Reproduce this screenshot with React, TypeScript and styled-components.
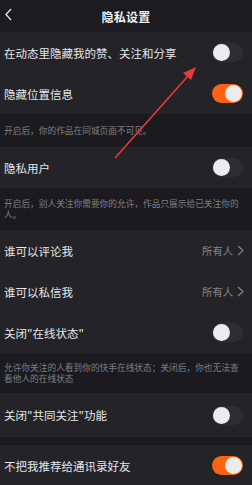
import * as React from 'react';
import styled, { createGlobalStyle } from 'styled-components';

const GlobalStyle = createGlobalStyle`
  html, body {
    margin: 0;
    padding: 0;
    background: #1b1b20;
  }
  * {
    box-sizing: border-box;
  }
`;

const Page = styled.div`
  position: relative;
  width: 252px;
  height: 485px;
  overflow: hidden;
  background: #1c1c21;
  font-family: 'Noto Sans CJK SC', 'Noto Sans', sans-serif;
  color: #e4e4e6;
`;
const Header = styled.div`
  height: 32px;
  display: flex;
  align-items: center;
  justify-content: center;
  position: relative;
  background: #1b1b20;
`;
const Back = styled.svg`
  position: absolute;
  left: 4px;
  top: 8px;
`;
const Title = styled.div`
  font-size: 12px;
  font-weight: 700;
  letter-spacing: 0.3px;
  color: #f0f0f2;
`;
const Row = styled.div<{ $h?: number }>`
  height: ${({ $h }) => $h ?? 41}px;
  padding: 0 9px 0 4px;
  display: flex;
  align-items: center;
  justify-content: space-between;
  background: #232328;
`;
const Label = styled.div`
  font-size: 11.5px;
  color: #e6e6e8;
  white-space: nowrap;
`;
const Note = styled.div<{ $h: number }>`
  height: ${({ $h }) => $h}px;
  padding: 0 8px 0 4px;
  display: flex;
  align-items: center;
  font-size: 8.7px;
  line-height: 11px;
  color: #7e7e84;
  background: #1b1b1f;
`;
const Gap = styled.div`
  height: 8px;
  background: #1b1b1f;
`;
const Track = styled.div<{ $on?: boolean }>`
  width: 31px;
  height: 19px;
  border-radius: 10px;
  padding: 1px;
  display: flex;
  justify-content: ${({ $on }) => ($on ? 'flex-end' : 'flex-start')};
  background: ${({ $on }) => ($on ? '#fb6312' : '#2d2d32')};
`;
const Thumb = styled.div`
  width: 17px;
  height: 17px;
  border-radius: 50%;
  background: #ececec;
`;
const Value = styled.div`
  display: flex;
  align-items: center;
  gap: 4px;
  font-size: 10.3px;
  color: #86868c;
  margin-right: -1px;
`;
const Arrow = styled.svg`
  position: absolute;
  left: 0;
  top: 0;
  pointer-events: none;
`;

function Toggle({ on }: { on?: boolean }) {
  return (
    <Track $on={on}>
      <Thumb />
    </Track>
  );
}

function Chevron() {
  return (
    <svg width="7" height="11" viewBox="0 0 7 11">
      <path d="M1 1 L6 5.5 L1 10" fill="none" stroke="#86868c" strokeWidth="1.1" />
    </svg>
  );
}

export default function App() {
  return (
    <Page>
      <GlobalStyle />
      <Header>
        <Back width="9" height="13" viewBox="0 0 9 13">
          <path d="M7 1 L2 6.5 L7 12" fill="none" stroke="#e8e8ea" strokeWidth="1.3" />
        </Back>
        <Title>隐私设置</Title>
      </Header>
      <Row>
        <Label>在动态里隐藏我的赞、关注和分享</Label>
        <Toggle />
      </Row>
      <Row>
        <Label>隐藏位置信息</Label>
        <Toggle on />
      </Row>
      <Note $h={33}>开启后，你的作品在同城页面不可见。</Note>
      <Row>
        <Label>隐私用户</Label>
        <Toggle />
      </Row>
      <Note $h={42}>开启后，别人关注你需要你的允许，作品只展示给已关注你的人。</Note>
      <Row>
        <Label>谁可以评论我</Label>
        <Value>所有人 <Chevron /></Value>
      </Row>
      <Row>
        <Label>谁可以私信我</Label>
        <Value>所有人 <Chevron /></Value>
      </Row>
      <Row>
        <Label>关闭"在线状态"</Label>
        <Toggle />
      </Row>
      <Note $h={40}>允许你关注的人看到你的快手在线状态；关闭后，你也无法查看他人的在线状态</Note>
      <Row $h={44}>
        <Label>关闭"共同关注"功能</Label>
        <Toggle />
      </Row>
      <Gap />
      <Row>
        <Label>不把我推荐给通讯录好友</Label>
        <Toggle on />
      </Row>
      <Arrow width="252" height="485" viewBox="0 0 252 485">
        <line x1="115" y1="158" x2="188" y2="76" stroke="#e8393a" strokeWidth="1.6" />
        <polygon points="196,67 183,73 191,80" fill="#e8393a" />
      </Arrow>
    </Page>
  );
}
